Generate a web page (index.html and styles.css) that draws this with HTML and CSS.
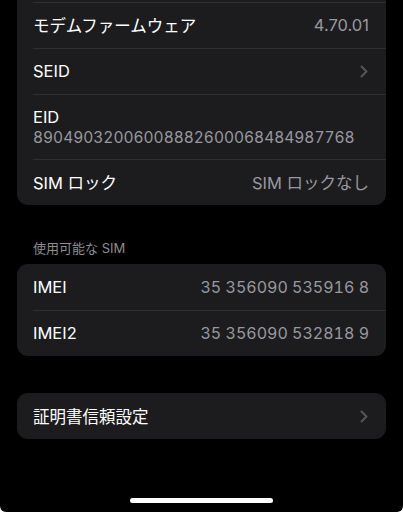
FILE: index.html
```html
<!DOCTYPE html>
<html lang="ja">

<head>
	<meta charset="UTF-8">
	<meta name="viewport" content="width=device-width, initial-scale=1.0">
	<title>情報</title>
	<link rel="stylesheet" href="styles.css">
</head>

<body>
	<main class="screen">
		<div class="group cut">
			<div class="row">
				<span class="label">モデムファームウェア</span>
				<span class="value">4.70.01</span>
			</div>
			<div class="row">
				<span class="label">SEID</span>
				<svg class="chevron" width="8" height="13" viewBox="0 0 8 13"><path d="M1.5 1.5 L6.5 6.5 L1.5 11.5" /></svg>
			</div>
			<div class="row stacked">
				<span class="label">EID</span>
				<span class="eid">89049032006008882600068484987768</span>
			</div>
			<div class="row">
				<span class="label">SIM ロック</span>
				<span class="value">SIM ロックなし</span>
			</div>
		</div>

		<h2 class="group-title">使用可能な SIM</h2>
		<div class="group">
			<div class="row">
				<span class="label">IMEI</span>
				<span class="value num">35 356090 535916 8</span>
			</div>
			<div class="row">
				<span class="label">IMEI2</span>
				<span class="value num">35 356090 532818 9</span>
			</div>
		</div>

		<div class="group spaced">
			<div class="row">
				<span class="label">証明書信頼設定</span>
				<svg class="chevron" width="8" height="13" viewBox="0 0 8 13"><path d="M1.5 1.5 L6.5 6.5 L1.5 11.5" /></svg>
			</div>
		</div>

		<div class="home-bar"></div>
	</main>
</body>

</html>
```

FILE: styles.css
```css
html {
	background: #fff;
}

body {
	margin: 0;
	padding: 0;
	font-family: Inter, "Noto Sans CJK JP", sans-serif;
	color: #fff;
}

.screen {
	position: relative;
	height: 512px;
	background: #000;
	border-radius: 0 0 6px 6px;
	overflow: hidden;
	padding: 0 17px;
	box-sizing: border-box;
}

.group {
	background: #1c1c1e;
	border-radius: 11px;
	overflow: hidden;
}

.group.cut {
	border-radius: 0 0 11px 11px;
	padding-top: 2px;
}

.group.spaced {
	margin-top: 37px;
}

.row {
	position: relative;
	display: flex;
	align-items: center;
	justify-content: space-between;
	height: 46px;
	padding: 0 17px 0 16px;
	box-sizing: border-box;
	font-size: 16.5px;
}

.row + .row::before,
.cut .row:first-child::before {
	content: "";
	position: absolute;
	top: 0;
	left: 16px;
	right: 0;
	height: 1px;
	background: #2f2f31;
}

.row.stacked {
	flex-direction: column;
	align-items: flex-start;
	justify-content: center;
	height: 65px;
	gap: 1px;
}

.label {
	color: #fff;
}

.value {
	color: #98989e;
}

.num {
	font-variant-numeric: tabular-nums;
	font-size: 16px;
}

.eid {
	color: #98989e;
	font-size: 15.5px;
	font-variant-numeric: tabular-nums;
}

.chevron {
	fill: none;
	stroke: #55555a;
	stroke-width: 2;
	stroke-linecap: round;
	stroke-linejoin: round;
	margin-right: 1px;
}

.group-title {
	margin: 35px 0 8px 16px;
	font-size: 13px;
	font-weight: normal;
	line-height: 16px;
	color: #8d8d93;
}

.home-bar {
	position: absolute;
	left: 130px;
	bottom: 9px;
	width: 143px;
	height: 5px;
	border-radius: 3px;
	background: #fff;
}
```
